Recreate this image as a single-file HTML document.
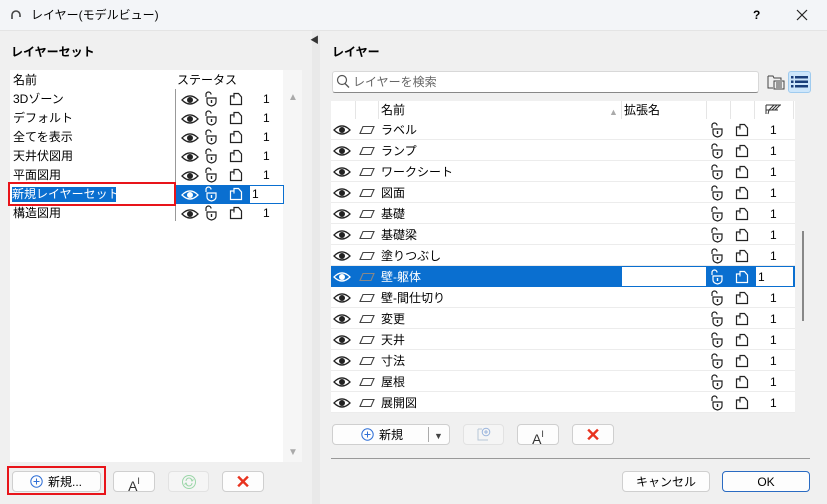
<!DOCTYPE html>
<html><head><meta charset="utf-8">
<style>
*{box-sizing:border-box;margin:0;padding:0}
body{width:827px;height:504px;background:#f0f0f0;font-family:"Liberation Sans","Noto Sans CJK JP",sans-serif;font-size:12px;color:#000;position:relative;overflow:hidden}
.a{position:absolute}
.t{position:absolute;white-space:nowrap;line-height:14px}
.btn{position:absolute;background:#fdfdfd;border:1px solid #cfcfcf;border-radius:4px;display:flex;align-items:center;justify-content:center}
.x{font-size:18px;color:#e8321e;font-weight:bold;line-height:18px}
.ai{font-size:14px;color:#333;line-height:14px;margin-top:4px}
.ai span{font-size:9px;vertical-align:7px}
svg{display:block}
</style></head><body>
<svg width="0" height="0" style="position:absolute">
<defs>
<symbol id="eye" viewBox="0 0 18 12"><path d="M1 6 Q9 -2 17 6 Q9 14 1 6Z" fill="none" stroke="currentColor" stroke-width="1.3"/><circle cx="9" cy="6" r="3" fill="currentColor"/></symbol>
<symbol id="lock" viewBox="0 0 14 16"><path d="M2 6 V3.5 A2.5 2.5 0 0 1 7 3.5" fill="none" stroke="currentColor" stroke-width="1.2"/><path d="M3 7 H12 V11 Q12 14 7.5 15 Q3 14 3 11Z" fill="none" stroke="currentColor" stroke-width="1.2"/><path d="M7.5 9 V12" stroke="currentColor" stroke-width="1.4"/></symbol>
<symbol id="fold" viewBox="0 0 14 14"><path d="M1.5 4 V12.5 H12.5 V5 L9.5 1.5 H5 V4Z" fill="none" stroke="currentColor" stroke-width="1.2"/><path d="M5 4 V6.5" fill="none" stroke="currentColor" stroke-width="1.1"/></symbol>
<symbol id="lay" viewBox="0 0 16 10"><path d="M4 1.5 H15 L12 8.5 H1Z" fill="none" stroke="currentColor" stroke-width="1.1"/><path d="M1 8.5 L2 6" stroke="currentColor"/></symbol>
</defs></svg>

<div class="a" style="left:0;top:0;width:827px;height:31px;background:#f3f5f8;border-bottom:1px solid #e4e4e4"></div>
<svg class="a" style="left:10px;top:9px" width="12" height="12" viewBox="0 0 12 12"><path d="M2 10 V6 A4 4 0 0 1 10 6 V8" fill="none" stroke="#444" stroke-width="1.6"/></svg>
<div class="t" style="left:31px;top:8px;font-size:12px">レイヤー(モデルビュー)</div>
<div class="t" style="left:753px;top:8px;font-weight:bold">?</div>
<svg class="a" style="left:796px;top:9px" width="12" height="12" viewBox="0 0 12 12"><path d="M1 1 L11 11 M11 1 L1 11" stroke="#222" stroke-width="1.2"/></svg>

<div class="t" style="left:11px;top:45px;font-weight:bold">レイヤーセット</div>
<div class="a" style="left:10px;top:70px;width:292px;height:392px;background:#fff"></div>
<div class="t" style="left:13px;top:73px">名前</div>
<div class="t" style="left:177px;top:73px">ステータス</div>
<div class="a" style="left:283px;top:70px;width:19px;height:392px;background:#f6f6f6"></div>
<div class="a" style="left:175px;top:89px;width:1px;height:132px;background:#999"></div>
<div class="t" style="left:288px;top:91px;color:#aaa;font-size:10px">▲</div>
<div class="t" style="left:288px;top:446px;color:#aaa;font-size:10px">▼</div>
<div id="leftrows"></div>

<div class="a" style="left:312px;top:31px;width:8px;height:473px;background:#e9e9e9"></div>
<div class="t" style="left:310px;top:33px;font-size:9px;color:#333">◀</div>

<div class="t" style="left:332px;top:45px;font-weight:bold">レイヤー</div>
<div class="a" style="left:332px;top:71px;width:427px;height:22px;background:#fff;border:1px solid #d8d8d8;border-bottom:1px solid #888;border-radius:3px"></div>
<svg class="a" style="left:336px;top:74px" width="14" height="15" viewBox="0 0 14 15"><circle cx="6" cy="6" r="4.5" fill="none" stroke="#555" stroke-width="1.2"/><path d="M9 9.5 L13 13.5" stroke="#555" stroke-width="1.3"/></svg>
<div class="t" style="left:353px;top:75px;color:#666">レイヤーを検索</div>
<svg class="a" style="left:767px;top:74px" width="18" height="16" viewBox="0 0 18 16"><path d="M1 2 H6 L7 4 H14 V6 M1 2 V14 H6" fill="none" stroke="#444"/><rect x="7" y="7" width="10" height="8" fill="none" stroke="#444"/><path d="M9 9 H15 M9 11 H15 M9 13 H15" stroke="#444"/></svg>
<div class="a" style="left:788px;top:71px;width:23px;height:22px;background:#cde6fb;border:1px solid #9fcbef;border-radius:3px"></div>
<svg class="a" style="left:791px;top:75px" width="17" height="14" viewBox="0 0 17 14"><g fill="#1a3f7a"><rect x="0" y="1" width="2.5" height="2.5"/><rect x="4" y="1" width="13" height="2.5"/><rect x="0" y="5.5" width="2.5" height="2.5"/><rect x="4" y="5.5" width="13" height="2.5"/><rect x="0" y="10" width="2.5" height="2.5"/><rect x="4" y="10" width="13" height="2.5"/></g></svg>

<div class="a" style="left:331px;top:101px;width:464px;height:311px;background:#fff"></div>
<div class="a" style="left:355px;top:101px;width:1px;height:18px;background:#e5e5e5"></div>
<div class="a" style="left:378px;top:101px;width:1px;height:18px;background:#e5e5e5"></div>
<div class="a" style="left:621px;top:101px;width:1px;height:18px;background:#e5e5e5"></div>
<div class="a" style="left:706px;top:101px;width:1px;height:18px;background:#e5e5e5"></div>
<div class="a" style="left:730px;top:101px;width:1px;height:18px;background:#e5e5e5"></div>
<div class="a" style="left:754px;top:101px;width:1px;height:18px;background:#e5e5e5"></div>
<div class="a" style="left:793px;top:101px;width:1px;height:18px;background:#e5e5e5"></div>
<div class="t" style="left:381px;top:103px">名前</div>
<div class="t" style="left:609px;top:105px;color:#aaa;font-size:9px">▲</div>
<div class="t" style="left:624px;top:103px">拡張名</div>
<svg class="a" style="left:765px;top:104px" width="17" height="11" viewBox="0 0 17 11"><path d="M1 1 H16 M1 1 V10 M4 6 L9 1 M7 6 L12 1 M10 6 L15 1 M3 10 L4 6 M1 6 H13" fill="none" stroke="#333"/></svg>
<div id="rightrows"></div>
<div class="a" style="left:802px;top:231px;width:2px;height:90px;background:#888"></div>

<div class="btn" style="left:332px;top:424px;width:118px;height:21px"></div>
<svg class="a" style="left:361px;top:428px" width="13" height="13" viewBox="0 0 13 13"><circle cx="6.5" cy="6.5" r="5.7" fill="none" stroke="#2f6fd6"/><path d="M6.5 3.5 V9.5 M3.5 6.5 H9.5" stroke="#2f6fd6"/></svg>
<div class="t" style="left:379px;top:428px">新規</div>
<div class="a" style="left:428px;top:427px;width:1px;height:15px;background:#aaa"></div>
<div class="t" style="left:434px;top:429px;font-size:9px;color:#444">▼</div>
<div class="btn" style="left:463px;top:424px;width:41px;height:21px;background:#f5f5f5;border-color:#e2e2e2"><svg width="14" height="15" viewBox="0 0 14 15"><path d="M1 2 V13 H11 M1 2 H5" fill="none" stroke="#b8c6d8"/><circle cx="9" cy="5" r="3.8" fill="none" stroke="#9ab5dd"/><path d="M9 3 V7 M7 5 H11" stroke="#9ab5dd"/></svg></div>
<div class="btn" style="left:517px;top:424px;width:42px;height:21px"><div class="ai">A<span>I</span></div></div>
<div class="btn" style="left:572px;top:424px;width:42px;height:21px"><div class="x">✕</div></div>

<div class="a" style="left:331px;top:458px;width:479px;height:1px;background:#999"></div>
<div class="btn" style="left:622px;top:471px;width:88px;height:21px"><span>キャンセル</span></div>
<div class="btn" style="left:722px;top:471px;width:88px;height:21px;border-color:#2a6bc2"><span>OK</span></div>

<div class="a" style="left:7px;top:466px;width:99px;height:29px;border:2px solid #e8141a"></div>
<div class="btn" style="left:12px;top:471px;width:89px;height:21px"></div>
<svg class="a" style="left:30px;top:475px" width="13" height="13" viewBox="0 0 13 13"><circle cx="6.5" cy="6.5" r="5.7" fill="none" stroke="#2f6fd6"/><path d="M6.5 3.5 V9.5 M3.5 6.5 H9.5" stroke="#2f6fd6"/></svg>
<div class="t" style="left:48px;top:475px">新規...</div>
<div class="btn" style="left:113px;top:471px;width:42px;height:21px"><div class="ai">A<span>I</span></div></div>
<div class="btn" style="left:168px;top:471px;width:41px;height:21px;background:#f5f5f5;border-color:#e2e2e2"><svg width="16" height="16" viewBox="0 0 16 16"><circle cx="8" cy="8" r="6.5" fill="none" stroke="#9bd6a8"/><path d="M5 7 A3 3 0 0 1 11 7 M11 9 A3 3 0 0 1 5 9 M10 5 L11 7 L12.5 5.5 M6 11 L5 9 L3.5 10.5" fill="none" stroke="#9bd6a8"/></svg></div>
<div class="btn" style="left:222px;top:471px;width:42px;height:21px"><div class="x">✕</div></div>

<script>
var L=["3Dゾーン","デフォルト","全てを表示","天井伏図用","平面図用","新規レイヤーセット","構造図用"];
var h="";
L.forEach(function(n,i){var y=89+i*19;var sel=i==5;
 if(sel){h+='<div class="a" style="left:176px;top:'+(y+1)+'px;width:108px;height:19px;background:#0a6fd0"></div>';
  h+='<div class="a" style="left:249px;top:'+(y+1)+'px;width:35px;height:19px;background:#fff;border:1px solid #0a6fd0"></div>';
  h+='<div class="a" style="left:8px;top:'+(y-2)+'px;width:168px;height:24px;border:2px solid #e8141a;background:#fff"></div>';
  h+='<div class="a" style="left:12px;top:'+(y+3)+'px;width:104px;height:15px;background:#0a6fd0"></div>';
  h+='<div class="t" style="left:12px;top:'+(y+3)+'px;color:#fff">'+n+'</div>';}
 else h+='<div class="t" style="left:13px;top:'+(y+3)+'px">'+n+'</div>';
 var c=sel?'#fff':'#222';
 h+='<svg class="a" style="left:181px;top:'+(y+5)+'px;color:'+c+'" width="18" height="12"><use href="#eye"/></svg>';
 h+='<svg class="a" style="left:204px;top:'+(y+2)+'px;color:'+c+'" width="14" height="16"><use href="#lock"/></svg>';
 h+='<svg class="a" style="left:229px;top:'+(y+3)+'px;color:'+c+'" width="14" height="14"><use href="#fold"/></svg>';
 h+='<div class="t" style="left:'+(sel?252:263)+'px;top:'+(y+3)+'px">1</div>';
});
document.getElementById('leftrows').innerHTML=h;
var R=["ラベル","ランプ","ワークシート","図面","基礎","基礎梁","塗りつぶし","壁-躯体","壁-間仕切り","変更","天井","寸法","屋根","展開図"];
h="";
R.forEach(function(n,i){var y=119+i*21;var sel=i==7;
 if(sel){h+='<div class="a" style="left:331px;top:'+y+'px;width:464px;height:21px;background:#0a6fd0"></div>';
  h+='<div class="a" style="left:622px;top:'+(y+1)+'px;width:84px;height:19px;background:#fff"></div>';
  h+='<div class="a" style="left:756px;top:'+(y+1)+'px;width:37px;height:19px;background:#fff"></div>';}
 else h+='<div class="a" style="left:331px;top:'+(y+20)+'px;width:464px;height:1px;background:#ececec"></div>';
 var c=sel?'#fff':'#222';
 h+='<svg class="a" style="left:333px;top:'+(y+5)+'px;color:'+c+'" width="18" height="12"><use href="#eye"/></svg>';
 h+='<svg class="a" style="left:359px;top:'+(y+6)+'px;color:'+(sel?'#888':'#444')+'" width="16" height="10"><use href="#lay"/></svg>';
 h+='<div class="t" style="left:381px;top:'+(y+4)+'px;color:'+(sel?'#fff':'#000')+'">'+n+'</div>';
 h+='<svg class="a" style="left:710px;top:'+(y+3)+'px;color:'+c+'" width="14" height="16"><use href="#lock"/></svg>';
 h+='<svg class="a" style="left:735px;top:'+(y+4)+'px;color:'+c+'" width="14" height="14"><use href="#fold"/></svg>';
 h+='<div class="t" style="left:'+(sel?758:770)+'px;top:'+(y+4)+'px">1</div>';
});
document.getElementById('rightrows').innerHTML=h;
</script>
</body></html>
